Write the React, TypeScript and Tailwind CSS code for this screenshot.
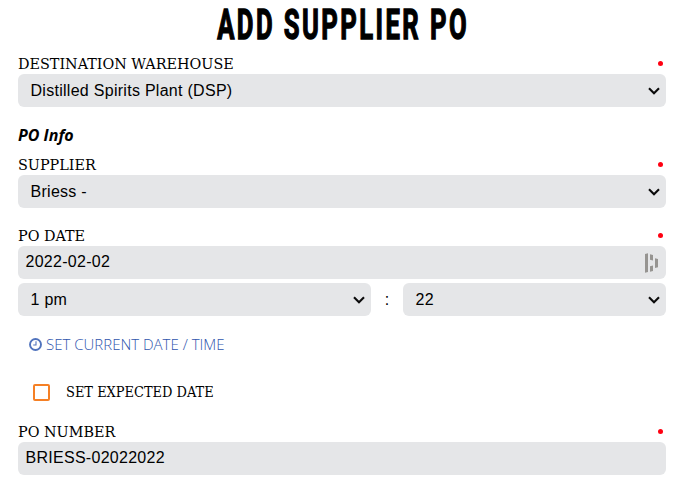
import type { ReactNode } from 'react';

function FieldLabel({ text }: { text: string }) {
  return (
    <div className="flex h-5 justify-between pr-[3px] tracking-normal">
      <span className="origin-left scale-x-[1.03] whitespace-nowrap font-['DejaVu_Serif_Condensed','DejaVu_Serif',serif] text-[15.5px] leading-[21px]">
        {text}
      </span>
      <span className="mt-[7px] size-[5px] shrink-0 rounded-full bg-[#ff0011]" />
    </div>
  );
}

function Chevron() {
  return (
    <svg width="12" height="8" viewBox="0 0 12 8" fill="none" className="shrink-0">
      <path d="M1 1.2 6 6.2 11 1.2" stroke="#0b0b0b" strokeWidth="2.1" />
    </svg>
  );
}

function SelectBox({ value, className = '' }: { value: string; className?: string }) {
  return (
    <div
      className={`flex h-[33px] items-center justify-between rounded-md bg-[#e5e6e8] pl-[12.5px] pr-1.5 ${className}`}
    >
      <span>{value}</span>
      <Chevron />
    </div>
  );
}

function InputBox({ value, children }: { value: string; children?: ReactNode }) {
  return (
    <div className="flex h-[33px] items-center justify-between rounded-md bg-[#e5e6e8] pl-[7.5px] pr-2">
      <span className="-mt-px">{value}</span>
      {children}
    </div>
  );
}

function PasswordManagerMark() {
  return (
    <svg width="13" height="20" viewBox="0 0 13 20" fill="#969491">
      <path d="M0 1 3 .3V19L0 19.7zM5 1.3 8 2V7.5L5 6.8zM5 13.2 8 12.5V18L5 18.7zM10 5.2 13 6V14.2L10 15z" />
    </svg>
  );
}

function ClockIcon() {
  return (
    <svg width="13" height="13" viewBox="0 0 13 13" fill="none" stroke="#5073bd">
      <circle cx="6.5" cy="6.5" r="5.5" strokeWidth="1.9" />
      <path d="M7 3.2V7H4.2" strokeWidth="1.1" />
    </svg>
  );
}

export default function App() {
  return (
    <div className="h-[483px] w-[675px] bg-white pl-[18px] pr-[9px] font-['Liberation_Sans',sans-serif] text-[16px] leading-5 tracking-[0.28px] text-black">
      <h1 className="flex h-[54px] justify-center">
        <span className="h-[49px] scale-x-[0.61] whitespace-nowrap pl-0.5 font-['Roboto',sans-serif] text-[42px] font-bold leading-[49px] tracking-[4px] [-webkit-text-stroke:1.4px_black]">
          ADD SUPPLIER PO
        </span>
      </h1>

      <FieldLabel text="DESTINATION WAREHOUSE" />
      <SelectBox value="Distilled Spirits Plant (DSP)" />

      <h2 className="mt-[18px] h-[30px] font-['Open_Sans',sans-serif] text-[16px] font-bold italic leading-5 tracking-normal">
        PO Info
      </h2>

      <FieldLabel text="SUPPLIER" />
      <SelectBox value="Briess -" />

      <div className="mt-[18px]">
        <FieldLabel text="PO DATE" />
        <InputBox value="2022-02-02">
          <PasswordManagerMark />
        </InputBox>
        <div className="mt-1 flex">
          <SelectBox value="1 pm" className="w-[353px]" />
          <span className="w-8 text-center leading-[33px]">:</span>
          <SelectBox value="22" className="w-[263px]" />
        </div>
      </div>

      <div className="mt-[18px] flex h-5 items-center gap-1 pl-[11px] font-['Open_Sans',sans-serif] text-[15px] font-light tracking-normal text-[#2f55ad]">
        <ClockIcon />
        <span className="whitespace-nowrap">SET CURRENT DATE / TIME</span>
      </div>

      <div className="mt-7 flex h-5 items-center pl-[15px] tracking-normal">
        <span className="size-[17px] rounded-[2px] border-2 border-[#f58025]" />
        <span className="ml-4 origin-left scale-x-[1.03] whitespace-nowrap font-['DejaVu_Serif_Condensed','DejaVu_Serif',serif] text-[14px]">
          SET EXPECTED DATE
        </span>
      </div>

      <div className="mt-5">
        <FieldLabel text="PO NUMBER" />
        <InputBox value="BRIESS-02022022" />
      </div>
    </div>
  );
}
